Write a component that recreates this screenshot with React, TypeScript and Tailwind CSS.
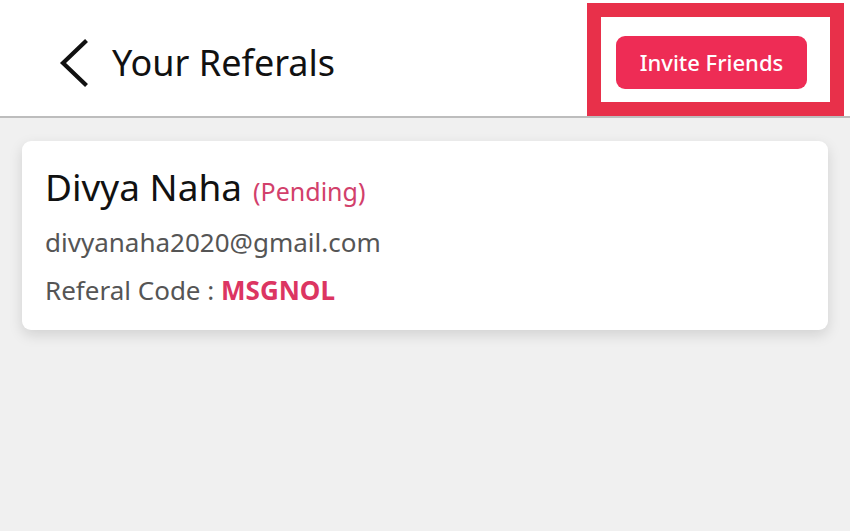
import React from "react";

const BackIcon = () => (
  <svg width="32" height="48" viewBox="0 0 32 48" fill="none">
    <path
      d="M27 3 L5 24 L27 45"
      stroke="#111"
      strokeWidth="4.2"
      strokeLinecap="square"
      strokeLinejoin="miter"
    />
  </svg>
);

const ReferalCard = () => (
  <div className="mx-[22px] mt-[23px] rounded-[9px] bg-white px-[23px] pt-[24px] pb-[23px] shadow-[0_5px_14px_rgba(0,0,0,0.13)]">
    <div className="flex items-baseline gap-[11px]">
      <span className="text-[37px] leading-[44px] text-[#111]">Divya Naha</span>
      <span className="text-[25px] text-[#d2406b]">(Pending)</span>
    </div>
    <div className="mt-[14px] text-[26px] leading-[34px] text-[#555]">
      divyanaha2020@gmail.com
    </div>
    <div className="mt-[14px] text-[26px] leading-[34px] text-[#555]">
      Referal Code : <span className="font-bold text-[#dc3562]">MSGNOL</span>
    </div>
  </div>
);

export default function App() {
  return (
    <div
      className="h-[531px] w-[850px] overflow-hidden bg-[#f0f0f0]"
      style={{ fontFamily: "'Noto Sans', Lato, sans-serif" }}
    >
      {/* header */}
      <div className="flex h-[118px] items-start justify-between border-b-2 border-[#bdbdbd] bg-white">
        <div className="flex items-center pl-[58px] pt-[39px]">
          <BackIcon />
          <span className="ml-[22px] text-[36px] leading-[46px] text-[#111]">
            Your Referals
          </span>
        </div>
        <div className="mr-[6px] mt-[3px] h-[113px] w-[257px] border-[14px] border-[#e8304a] pl-[15px] pt-[19px]">
          <button className="h-[53px] w-[191px] rounded-[9px] bg-[#ee2c55] text-[22px] font-medium text-white">
            Invite Friends
          </button>
        </div>
      </div>

      <ReferalCard />
    </div>
  );
}
